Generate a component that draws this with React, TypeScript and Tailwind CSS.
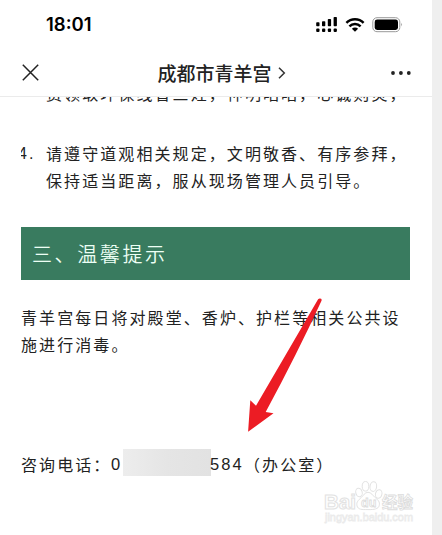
import React from 'react';

const cjk = "font-['Noto_Sans_CJK_SC',sans-serif]";
const latin = "font-['Liberation_Sans',sans-serif]";

function StatusBar() {
  return (
    <div className="flex h-[49px] items-center justify-between pr-[29px] pl-[46px]">
      <span className="font-['Inter',sans-serif] text-[18.5px] leading-none font-semibold text-black">18:01</span>
      <svg width="88" height="18" viewBox="315 16 88 18" className="text-black">
        <g fill="currentColor">
          <rect x="316.2" y="22.3" width="3.3" height="4" rx="0.8" />
          <rect x="322" y="21.3" width="3.3" height="5" rx="0.8" />
          <rect x="327.8" y="19" width="3.3" height="7.3" rx="0.8" />
          <rect x="333.6" y="17" width="3.3" height="9.3" rx="0.8" />
          <rect x="316.2" y="28.4" width="3.3" height="3.5" rx="1" />
          <rect x="322" y="28.4" width="3.3" height="3.5" rx="1" />
          <rect x="327.8" y="28.4" width="3.3" height="3.5" rx="1" />
          <rect x="333.6" y="28.4" width="3.3" height="3.5" rx="1" />
          <path d="M351.9 28.7a4.4 4.4 0 0 1 6.2 0L355 31.7z" />
        </g>
        <g fill="none" stroke="currentColor" strokeWidth="2.5">
          <path d="M346.4 22.9a12.2 12.2 0 0 1 17.2 0" />
          <path d="M349.4 26.4a8 8 0 0 1 11.2 0" />
        </g>
        <rect x="372.8" y="17.7" width="27" height="14" rx="4.2" fill="none" stroke="#999" strokeWidth="1" />
        <rect x="374.7" y="19.6" width="23.3" height="10.3" rx="2.4" fill="#000" />
        <path d="M401.2 22.8q1.8 1.8 0 3.8z" fill="#999" />
      </svg>
    </div>
  );
}

function NavBar() {
  return (
    <div className="flex h-12 items-center justify-between border-b border-[#ebebeb] pr-[21px] pl-[22px]">
      <svg width="17" height="17" viewBox="0 0 17 17" fill="none" stroke="#222" strokeWidth="1.5">
        <path d="M.8.8l15.4 15.4M16.2.8L.8 16.2" />
      </svg>
      <div className="ml-[13px] flex items-center gap-[6px]">
        <span className={`${cjk} text-[19px] leading-[26px] font-medium text-[#222]`}>成都市青羊宫</span>
        <svg width="8" height="12" viewBox="0 0 8 12" fill="none" stroke="#333" strokeWidth="1.5">
          <path d="M1 .8L6.3 6L1 11.2" />
        </svg>
      </div>
      <svg width="20" height="4" viewBox="0 0 20 4" fill="#222">
        <circle cx="2" cy="2" r="1.9" />
        <circle cx="9.9" cy="2" r="1.9" />
        <circle cx="17.8" cy="2" r="1.9" />
      </svg>
    </div>
  );
}

function Watermark() {
  return (
    <svg className="absolute top-[480px] left-[322px]" width="96" height="48" viewBox="322 480 96 48">
      <g fill="#fff" stroke="#e2e2e2" strokeWidth="1">
        <text x="324" y="508.5" fontFamily="Liberation Sans, sans-serif" fontWeight="700" fontSize="20" textLength="32" lengthAdjust="spacingAndGlyphs">Bai</text>
        <ellipse cx="359" cy="492.5" rx="3.2" ry="4.3" transform="rotate(-15 359 492.5)" />
        <ellipse cx="365.5" cy="486.3" rx="3.3" ry="4.8" />
        <ellipse cx="373.3" cy="486.6" rx="3.3" ry="4.8" transform="rotate(8 373.3 486.6)" />
        <ellipse cx="378.7" cy="494" rx="3.2" ry="4.3" transform="rotate(15 378.7 494)" />
        <path d="M368 492.3c3.2 0 4.8 3.2 7.2 5.3 2.7 2.3 5 4.2 4 8-.9 3.6-5 4-11.2 4s-10 .1-11-3.8c-.9-3.8 1.5-5.7 4.1-8.1 2.4-2.2 3.6-5.4 6.9-5.4z" />
      </g>
      <text x="361" y="506.5" fontFamily="Liberation Sans, sans-serif" fontWeight="700" fontSize="12.5" fill="#fff" stroke="#dcdcdc" strokeWidth="0.8">du</text>
      <text x="382" y="507.5" fontFamily="Noto Sans CJK SC, sans-serif" fontWeight="700" fontSize="15.5" fill="#fff" stroke="#dcdcdc" strokeWidth="0.8">经验</text>
      <text x="325" y="520.5" fontFamily="Liberation Sans, sans-serif" fontSize="11" fill="#fff" stroke="#ebebeb" strokeWidth="0.8" textLength="88" lengthAdjust="spacingAndGlyphs">jingyan.baidu.com</text>
    </svg>
  );
}

export default function App() {
  return (
    <div className="relative flex h-[535px] w-[442px] overflow-hidden bg-[#efefef]">
      <div className="w-[432px] bg-white">
        <StatusBar />
        <NavBar />
        <main className={`${cjk} text-[16px] leading-[27px] tracking-[2.08px] text-[#222]`}>
          <div className="flex h-[43px] items-start overflow-hidden pl-[46px]">
            <p className="-mt-[17px] whitespace-nowrap">费领取环保线香三炷，神明昭昭，心诚则灵，</p>
          </div>
          <div className="flex pl-[21px]">
            <div className="flex w-[25px] overflow-hidden">
              <span className={`${latin} -ml-[3px]`}>4.</span>
            </div>
            <p className="whitespace-nowrap">
              请遵守道观相关规定，文明敬香、有序参拜，
              <br />
              保持适当距离，服从现场管理人员引导。
            </p>
          </div>
          <h2 className="mt-[33px] ml-[21px] flex h-[53px] w-[389px] items-center bg-[#397b5f] pl-[11px] text-[20px] font-[350] tracking-[2.6px] text-[#edfff5]">
            三、温馨提示
          </h2>
          <p className="mt-[24px] pl-[21px] whitespace-nowrap">
            青羊宫每日将对殿堂、香炉、护栏等相关公共设
            <br />
            施进行消毒。
          </p>
          <div className="mt-[91px] flex items-start pl-[21px] whitespace-nowrap">
            <span className="mt-[2px] w-[90px]">咨询电话：</span>
            <span className={`${latin} mt-[2px] w-[12px] text-[16.5px]`}>0</span>
            <span className="h-[27px] w-[88px] bg-linear-to-r from-[#ededed] via-[#e5e5e5] to-[#e2e2e2]" />
            <span className={`${latin} mt-[2px] -ml-[1px] w-[35px] text-[16.5px]`}>584</span>
            <span className="mt-[2px] -ml-[1px]">（办公室）</span>
          </div>
        </main>
      </div>
      <svg className="absolute top-[296px] left-[246px]" width="78" height="138" viewBox="246 296 78 138">
        <path d="M248.1 431.8L250.3 400.2L256 405.8L318.1 299.3Q319.5 297.8 321.1 298.8Q322 299.6 321.4 301Q297 354 265.7 412L273.5 413.3Z" fill="#ec1c24" />
      </svg>
      <Watermark />
    </div>
  );
}
